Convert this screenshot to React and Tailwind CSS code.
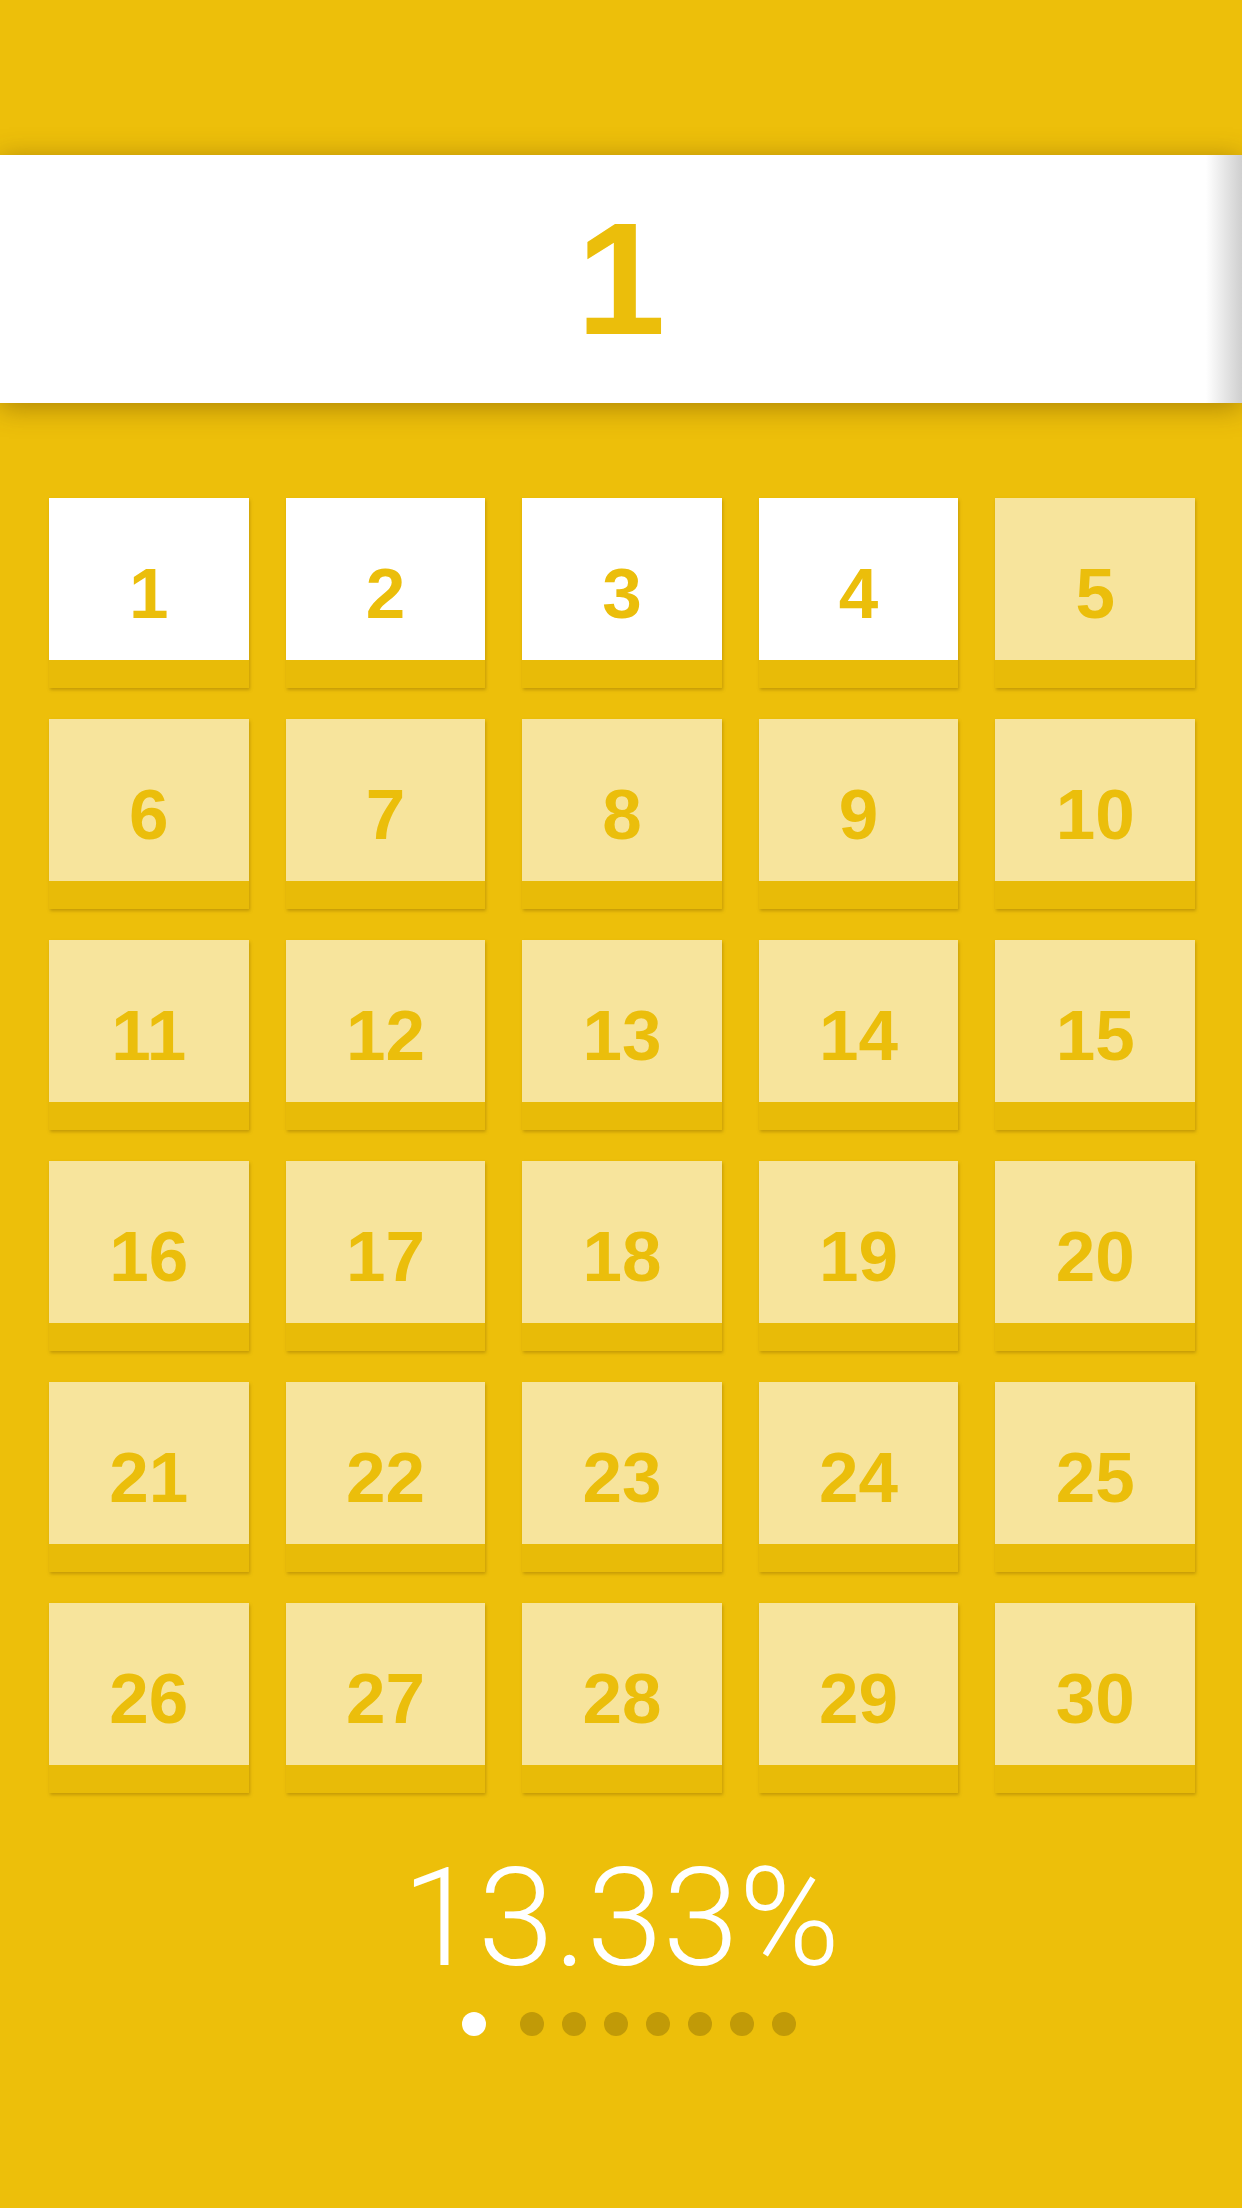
import React from "react";

const levels = Array.from({ length: 30 }, (_, i) => i + 1);
const unlocked = 4;

const LevelTile = ({ n }) => {
  const open = n <= unlocked;
  return (
    <div
      className={`relative flex h-[190px] flex-col shadow-[1px_2px_3px_rgba(120,90,0,0.35)] ${
        open ? "bg-white" : "bg-[#f7e49c]"
      }`}
    >
      <div className="flex-1" />
      <div className="h-[28px] bg-[#e8bb08]" />
      <div className="absolute inset-0 flex items-center justify-center">
        <span className="font-['Liberation_Sans',Arial,sans-serif] text-[71px] font-bold leading-none text-[#ebbe0b]">
          {n}
        </span>
      </div>
    </div>
  );
};

export default function App() {
  return (
    <div className="flex min-h-[2208px] w-full flex-col bg-[#edbf0a] font-['Liberation_Sans',Arial,sans-serif]">
      {/* current level banner */}
      <div className="h-[155px]" />
      <div className="relative z-10 flex h-[248px] items-center justify-center bg-white shadow-[0_4px_26px_rgba(90,60,0,0.45)]">
        <span className="font-['Liberation_Sans',Arial,sans-serif] text-[160px] font-bold leading-none text-[#ebbe0b]">
          1
        </span>
        {/* edge shadow of the next page */}
        <div className="absolute inset-y-0 right-0 w-[36px] bg-gradient-to-r from-white/0 to-[#cfcfcf]" />
      </div>

      {/* level grid */}
      <div className="mt-[95px] grid grid-cols-5 gap-x-[37px] gap-y-[31px] pl-[49px] pr-[47px]">
        {levels.map((n) => (
          <LevelTile key={n} n={n} />
        ))}
      </div>

      {/* progress */}
      <div className="mt-[60px] flex h-[130px] items-center justify-center">
        <span className="font-['Roboto','Liberation_Sans',sans-serif] text-[137px] font-light leading-none text-white">
          13.33%
        </span>
      </div>
      <div className="mt-[29px] flex items-center justify-center pl-[16px]">
        <div className="mr-[34px] h-[24px] w-[24px] rounded-full bg-white" />
        <div className="flex gap-[18px]">
          {Array.from({ length: 7 }).map((_, i) => (
            <div key={i} className="h-[24px] w-[24px] rounded-full bg-[#c19a07]" />
          ))}
        </div>
      </div>
    </div>
  );
}
